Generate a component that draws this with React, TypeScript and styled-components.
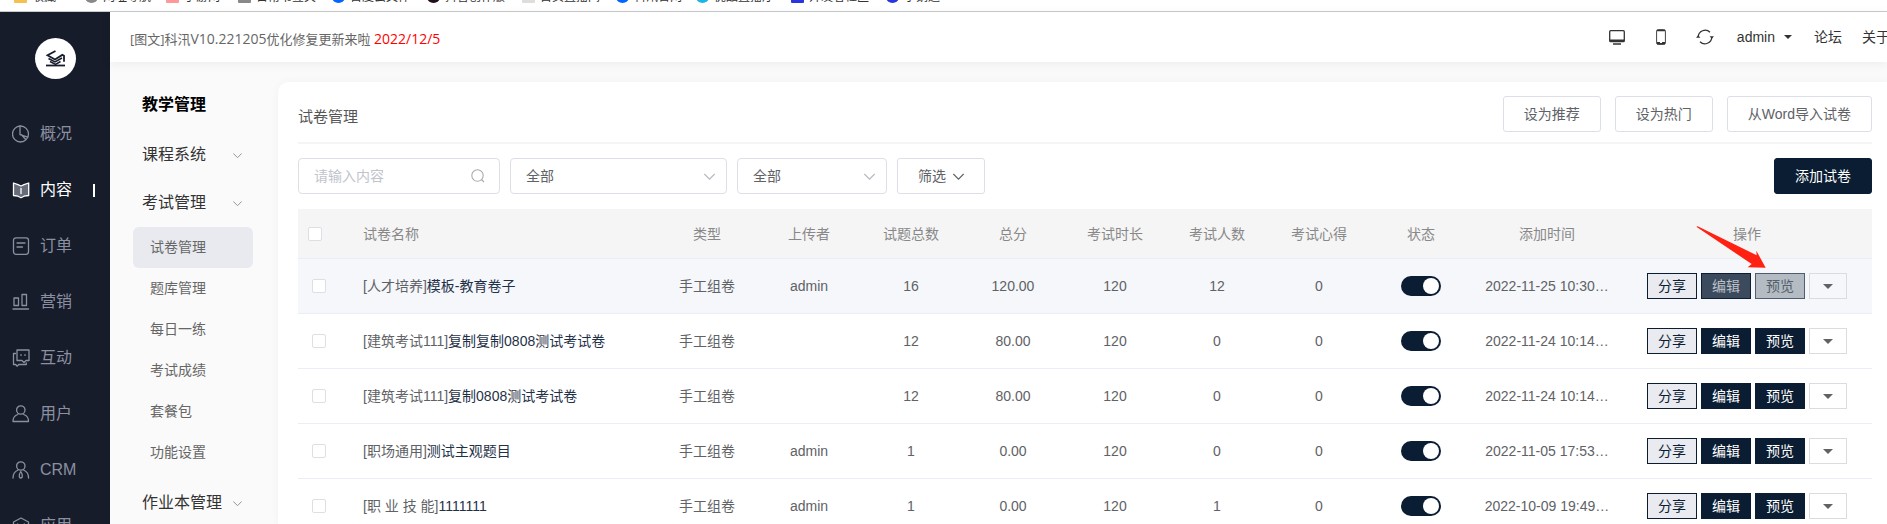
import React from "react";
import styled, { createGlobalStyle, css } from "styled-components";

const NAVY = "#0a1d33";
const LINE = "#ebeef5";

const GlobalStyle = createGlobalStyle`
  *, *::before, *::after { box-sizing: border-box; }
  body {
    margin: 0;
    background: #fafafa;
    font-family: "Liberation Sans", "Noto Sans CJK SC", sans-serif;
    font-size: 14px;
    line-height: 20px;
    color: #606266;
  }
  button, input, select { font: inherit; color: inherit; margin: 0; }
  a { color: inherit; text-decoration: none; }
  ul { list-style: none; margin: 0; padding: 0; }
`;

const Page = styled.div`
  display: flex;
  flex-direction: column;
  height: 100vh;
  overflow: hidden;
`;

/* ---------- bookmarks strip ---------- */
const Bookmarks = styled.nav`
  flex: none;
  display: flex;
  align-items: flex-end;
  height: 12px;
  padding: 0 14px 6px;
  overflow: hidden;
  background: #fff;
  border-bottom: 1px solid #c8cbcd;
  font-size: 12px;
  line-height: 16px;
  color: #333;
`;
const Bookmark = styled.a<{ $w: number }>`
  flex: none;
  display: flex;
  align-items: center;
  gap: 5px;
  width: ${(p) => p.$w}px;
  white-space: nowrap;
`;
const Favicon = styled.span<{ $c: string; $round?: boolean }>`
  width: 13px;
  height: 12px;
  background: ${(p) => p.$c};
  border-radius: ${(p) => (p.$round ? "50%" : "1px")};
`;

/* ---------- shell ---------- */
const Shell = styled.div`
  flex: 1;
  display: flex;
  min-height: 0;
`;
const Sidebar = styled.aside`
  flex: none;
  width: 110px;
  padding-top: 26px;
  overflow: hidden;
  background: #171c2b;
`;
const Logo = styled.a`
  display: flex;
  align-items: center;
  justify-content: center;
  width: 41px;
  height: 41px;
  margin: 0 auto 27px;
  border-radius: 50%;
  background: #fff;
`;
const SideLink = styled.a<{ $active?: boolean }>`
  display: flex;
  align-items: center;
  gap: 10px;
  height: 56px;
  padding: 0 15px 0 12px;
  font-size: 16px;
  color: ${(p) => (p.$active ? "#fff" : "#8b90a0")};
  ${(p) =>
    p.$active &&
    css`
      &::after {
        content: "";
        width: 2px;
        height: 13px;
        margin-left: auto;
        background: #fff;
      }
    `}
`;
const SideIcon = styled.svg`
  flex: none;
  width: 18px;
  height: 18px;
  fill: none;
  stroke: currentColor;
  stroke-width: 1.3;
  stroke-linejoin: round;
  stroke-linecap: round;
`;

const Body = styled.div`
  flex: 1;
  display: flex;
  flex-direction: column;
  min-width: 0;
`;
const TopBar = styled.header`
  position: relative;
  flex: none;
  display: flex;
  align-items: center;
  justify-content: space-between;
  height: 50px;
  padding-left: 20px;
  background: #fff;
  box-shadow: 0 2px 10px rgba(0, 0, 0, 0.06);
`;
const Notice = styled.a`
  padding-top: 4px;
  font-family: "Open Sans", "Noto Sans CJK SC", sans-serif;
  font-size: 13px;
  color: #666;
  white-space: nowrap;
`;
const Figures = styled.span<{ $red?: boolean }>`
  font-size: 14px;
  color: ${(p) => (p.$red ? "#f00" : "inherit")};
`;
const TopTools = styled.div`
  display: flex;
  align-items: center;
  color: #333;
  overflow: hidden;
`;
const ToolButton = styled.button`
  display: flex;
  align-items: center;
  justify-content: center;
  width: 44px;
  height: 24px;
  padding: 0;
  border: 0;
  background: none;
`;
const UserMenu = styled.button`
  display: flex;
  align-items: center;
  gap: 9px;
  margin: 0 2px 0 10px;
  padding: 0;
  border: 0;
  background: none;
`;
const TopLink = styled.a`
  margin-left: 20px;
  white-space: nowrap;
`;
const CutLink = styled(TopLink)`
  width: 25px;
`;
const Caret = styled.span<{ $s: number }>`
  border: ${(p) => p.$s}px solid transparent;
  border-top-color: currentColor;
  border-bottom-width: 0;
`;

const Columns = styled.div`
  flex: 1;
  display: flex;
  min-height: 0;
`;

/* ---------- second level menu ---------- */
const SubNav = styled.nav`
  flex: none;
  width: 168px;
  padding: 17px 25px 0 23px;
  overflow: hidden;
  background: #fafafa;
`;
const SubTitle = styled.h2`
  margin: 0;
  padding-left: 9px;
  font-size: 16px;
  line-height: 52px;
  font-weight: 700;
  color: #000;
`;
const GroupButton = styled.button`
  display: flex;
  align-items: center;
  justify-content: space-between;
  width: 100%;
  height: 48px;
  padding: 0 11px 0 9px;
  border: 0;
  background: none;
  font-size: 16px;
  color: #333;
  white-space: nowrap;
`;
const SubList = styled.ul`
  padding-bottom: 6px;
`;
const SubLink = styled.a<{ $active?: boolean }>`
  display: block;
  padding-left: 17px;
  line-height: 41px;
  border-radius: 6px;
  color: #666;
  background: ${(p) => (p.$active ? "#e8eaef" : "transparent")};
`;

/* ---------- main card ---------- */
const Main = styled.main`
  flex: 1;
  min-width: 0;
  padding-top: 20px;
`;
const Card = styled.section`
  height: 100%;
  padding: 0 15px 0 20px;
  border-radius: 10px 0 0 0;
  background: #fff;
  box-shadow: 0 0 8px rgba(0, 0, 0, 0.04);
`;
const CardHead = styled.div`
  display: flex;
  align-items: center;
  padding: 14px 0 10px;
  border-bottom: 2px solid #f5f5f5;
`;
const CardTitle = styled.h1`
  margin: 0 auto 0 0;
  padding-top: 6px;
  font-size: 15px;
  font-weight: 400;
  color: #555;
`;
const Button = styled.button<{ $primary?: boolean }>`
  display: flex;
  align-items: center;
  gap: 7px;
  height: 36px;
  padding: 0 20px;
  border: 1px solid ${(p) => (p.$primary ? NAVY : "#dcdfe6")};
  border-radius: 3px;
  background: ${(p) => (p.$primary ? NAVY : "#fff")};
  color: ${(p) => (p.$primary ? "#fff" : "#606266")};
  white-space: nowrap;
  ${CardHead} & + & { margin-left: 14px; }
`;
const Filters = styled.div`
  display: flex;
  gap: 10px;
  padding: 14px 0 15px;
  ${Button}:last-child { margin-left: auto; }
`;
const Field = styled.label<{ $w: number }>`
  display: flex;
  align-items: center;
  width: ${(p) => p.$w}px;
  height: 36px;
  padding-right: 11px;
  border: 1px solid #dcdfe6;
  border-radius: 4px;
  background: #fff;
  color: #c0c4cc;
`;
const fieldControl = css`
  flex: 1;
  min-width: 0;
  height: 34px;
  padding: 0 0 0 15px;
  border: 0;
  outline: 0;
  background: none;
  color: #606266;
`;
const TextInput = styled.input`
  ${fieldControl}
  &::placeholder { color: #c0c4cc; opacity: 1; }
`;
const Select = styled.select`
  ${fieldControl}
  appearance: none;
`;

/* ---------- table ---------- */
const Table = styled.table`
  width: 100%;
  table-layout: fixed;
  border-collapse: separate;
  border-spacing: 0;
`;
const Th = styled.th<{ $w?: number; $left?: boolean }>`
  width: ${(p) => (p.$w ? `${p.$w}px` : "auto")};
  height: 50px;
  padding: 0 10px;
  border-bottom: 1px solid ${LINE};
  background: #f5f5f5;
  font-weight: 400;
  color: #888;
  text-align: ${(p) => (p.$left ? "left" : "center")};
`;
const Td = styled.td<{ $left?: boolean }>`
  height: 55px;
  padding: 0 10px;
  border-bottom: 1px solid ${LINE};
  text-align: ${(p) => (p.$left ? "left" : "center")};
  white-space: nowrap;
`;
const CheckTd = styled(Td)`
  padding-left: 14px;
`;
const Row = styled.tr<{ $hover?: boolean }>`
  background: ${(p) => (p.$hover ? "#f5f7fb" : "#fff")};
`;
const Check = styled.input`
  appearance: none;
  display: block;
  width: 14px;
  height: 14px;
  border: 1px solid #dcdfe6;
  border-radius: 2px;
  background: #fff;
`;
const PaperLink = styled.a`
  color: #1f3147;
`;
const Switch = styled.input`
  appearance: none;
  display: block;
  width: 40px;
  height: 20px;
  margin: 0 auto;
  padding: 2px;
  border-radius: 10px;
  background: ${NAVY};
  &::before {
    content: "";
    display: block;
    width: 16px;
    height: 16px;
    margin-left: 20px;
    border-radius: 50%;
    background: #fff;
  }
`;
const Actions = styled.div`
  position: relative;
  display: flex;
  justify-content: center;
  gap: 4px;
`;
const looks = {
  light: ["#e9ebf0", NAVY, NAVY],
  solid: [NAVY, NAVY, "#fff"],
  pressed: ["#3b4a5c", NAVY, "#bcc1c8"],
  faded: ["#b4bbc2", "#4e5e70", "#53606d"],
  plain: ["transparent", "#dcdcdc", "#606266"],
};
const ActionButton = styled.button<{ $look: keyof typeof looks }>`
  display: flex;
  align-items: center;
  justify-content: center;
  width: ${(p) => (p.$look === "plain" ? 38 : 50)}px;
  height: 26px;
  padding: 0;
  background: ${(p) => looks[p.$look][0]};
  border: 1px solid ${(p) => looks[p.$look][1]};
  color: ${(p) => looks[p.$look][2]};
`;
const Pointer = styled.svg`
  position: absolute;
  right: 96px;
  bottom: 31px;
  width: 70px;
  height: 42px;
  pointer-events: none;
`;

const Chevron = ({ size = 9, color = "#909399" }: { size?: number; color?: string }) => (
  <svg width={size} height={size} viewBox="0 0 10 10" fill="none" stroke={color} strokeWidth="1.1" aria-hidden="true">
    <path d="M0.3 2.7 5 7.4 9.7 2.7" />
  </svg>
);

const sideIcons: Record<string, React.ReactNode> = {
  概况: (
    <>
      <circle cx="8.5" cy="9" r="8" />
      <path d="M8 1v8.6l7.8 2.6M9.5 9.7l4 4.6" />
    </>
  ),
  内容: (
    <>
      <path d="M1.500 2 6 3.600 9 5l3-1.400L16.700 2v12.500L12 15.200 9 16.800 6 15.200 1.500 14.500z" fill="#686c78" />
      <path d="M9 7.500v5" />
    </>
  ),
  订单: (
    <>
      <rect x="1.500" y="0.800" width="15" height="16.500" rx="2.500" />
      <path d="M5 6h8M5 10h5.500" />
    </>
  ),
  营销: (
    <>
      <rect x="2" y="5" width="4.500" height="7.500" />
      <rect x="10" y="1.500" width="4.500" height="11" />
      <path d="M1 16h15.500" />
    </>
  ),
  互动: (
    <>
      <path d="M5 1h12v10.500h-3l-2 2-2-2H5zM3.500 4.500H1.500v11h2.200l1.300 1.700 1.800-1.700h7.500V14" />
      <path d="M9 5.600v.8M13 5.600v.8" />
    </>
  ),
  用户: (
    <>
      <circle cx="8.800" cy="5" r="4.200" />
      <path d="M5.800 9.500C2.500 10.500 1 12.500 1 16.500h15.500c0-4-1.500-6-4.800-7" />
    </>
  ),
  CRM: (
    <>
      <circle cx="8.800" cy="5" r="4.200" />
      <path d="M6 9C2.500 10.500 1 13 1 17M11.600 9c3.500 1.500 5 4 5 8M8.800 10.500c-2 3-2 6.500 0 6.500s2-3.500 0-6.500z" />
    </>
  ),
  应用: (
    <>
      <path d="M9 1l7.500 4v8.500L9 17.500l-7.500-4V5z" />
      <path d="M5.500 7 9 9l3.500-2M9 9v4" />
    </>
  ),
};

const bookmarks: [string, string, boolean, number][] = [
  ["收藏", "#f5c04f", false, 71],
  ["网址导航", "#888", true, 81],
  ["手游网", "#f99", false, 72],
  ["日常书签夹", "#888", false, 94],
  ["百度云文件", "#06f", true, 95],
  ["抖音创作版", "#201018", true, 95],
  ["首页直播间", "#ddd", false, 94],
  ["科汛官网", "#06f", true, 80],
  ["优酷直播厅", "#19b6e8", true, 95],
  ["开发者社区", "#2a35e0", false, 95],
  ["小鹅通", "#2a35e0", true, 70],
];

const columns: [string, number][] = [
  ["类型", 102], ["上传者", 102], ["试题总数", 102], ["总分", 102], ["考试时长", 102],
  ["考试人数", 102], ["考试心得", 102], ["状态", 102], ["添加时间", 150], ["操作", 250],
];

const papers = [
  { tag: "人才培养", name: "模板-教育卷子", by: "admin", n: "16", score: "120.00", people: "12", at: "2022-11-25 10:30" },
  { tag: "建筑考试111", name: "复制复制0808测试考试卷", by: "", n: "12", score: "80.00", people: "0", at: "2022-11-24 10:14" },
  { tag: "建筑考试111", name: "复制0808测试考试卷", by: "", n: "12", score: "80.00", people: "0", at: "2022-11-24 10:14" },
  { tag: "职场通用", name: "测试主观题目", by: "admin", n: "1", score: "0.00", people: "0", at: "2022-11-05 17:53" },
  { tag: "职 业 技 能", name: "1111111", by: "admin", n: "1", score: "0.00", people: "1", at: "2022-10-09 19:49" },
];

export default function App() {
  return (
    <Page>
      <GlobalStyle />
      <Bookmarks aria-label="书签">
        {bookmarks.map(([name, color, round, w]) => (
          <Bookmark key={name} href="#" $w={w}>
            <Favicon $c={color} $round={round} />
            {name}
          </Bookmark>
        ))}
      </Bookmarks>
      <Shell>
        <Sidebar>
          <Logo href="#" aria-label="首页">
            <svg width="21" height="17" viewBox="0 0 21 17" fill="none" stroke="#171c2b" strokeWidth="1.800" aria-hidden="true">
              <path d="M10.500 1 2.500 5.300l7.500 4.200 7.300-4.600 1.700.9v6" />
              <path d="M3.500 8.500 10 12l7-4M5 11.500l5.500 3 5-3" strokeWidth="1.500" />
              <path d="M1 15.500h19" />
            </svg>
          </Logo>
          <nav>
            {Object.keys(sideIcons).map((name) => (
              <SideLink key={name} href="#" $active={name === "内容"}>
                <SideIcon viewBox="0 0 18 18" aria-hidden="true">{sideIcons[name]}</SideIcon>
                {name}
              </SideLink>
            ))}
          </nav>
        </Sidebar>
        <Body>
          <TopBar>
            <Notice href="#">
              [图文]科汛<Figures>V10.221205</Figures>优化修复更新来啦 <Figures $red>2022/12/5</Figures>
            </Notice>
            <TopTools>
              <ToolButton aria-label="电脑端">
                <svg width="16" height="15" viewBox="0 0 16 15" aria-hidden="true">
                  <rect x="0.700" y="0.700" width="14.600" height="11" rx="1" fill="none" stroke="#333" strokeWidth="1.300" />
                  <path d="M1 9.500h14v2.200H1zM4 13.300h8v1.400H4z" fill="#333" />
                </svg>
              </ToolButton>
              <ToolButton aria-label="手机端">
                <svg width="10" height="16" viewBox="0 0 10 16" aria-hidden="true">
                  <rect x="0.600" y="0.600" width="8.800" height="14.800" rx="1.500" fill="none" stroke="#444" strokeWidth="1" />
                  <path d="M1 1h8v1.300H1zM1 13h3v1h2v-1h3v2.200H1z" fill="#333" />
                </svg>
              </ToolButton>
              <ToolButton aria-label="刷新">
                <svg width="18" height="16" viewBox="0 0 18 16" fill="none" stroke="#333" strokeWidth="1.300" aria-hidden="true">
                  <path d="M2.200 8A6.900 6.900 0 0 1 14 3.300M15.800 8A6.900 6.900 0 0 1 4 12.700" />
                  <path d="M0 8.800h4.400L2.200 6.300zM18 7.200h-4.400l2.200 2.500z" fill="#333" stroke="none" />
                </svg>
              </ToolButton>
              <UserMenu>
                admin
                <Caret $s={4} />
              </UserMenu>
              <TopLink href="#">论坛</TopLink>
              <CutLink href="#">关于我们</CutLink>
            </TopTools>
          </TopBar>
          <Columns>
            <SubNav>
              <SubTitle>教学管理</SubTitle>
              <GroupButton>课程系统<Chevron /></GroupButton>
              <GroupButton>考试管理<Chevron /></GroupButton>
              <SubList>
                {["试卷管理", "题库管理", "每日一练", "考试成绩", "套餐包", "功能设置"].map((name, i) => (
                  <li key={name}>
                    <SubLink href="#" $active={i === 0}>{name}</SubLink>
                  </li>
                ))}
              </SubList>
              <GroupButton>作业本管理<Chevron /></GroupButton>
            </SubNav>
            <Main>
              <Card>
                <CardHead>
                  <CardTitle>试卷管理</CardTitle>
                  <Button>设为推荐</Button>
                  <Button>设为热门</Button>
                  <Button>从Word导入试卷</Button>
                </CardHead>
                <Filters>
                  <Field $w={202}>
                    <TextInput placeholder="请输入内容" aria-label="搜索试卷" />
                    <svg width="18" height="14" viewBox="0 0 18 14" fill="none" stroke="#a8abb2" strokeWidth="1.100" aria-hidden="true">
                      <circle cx="7.500" cy="6.500" r="5.700" />
                      <path d="m11.500 10.500 2.500 2.500" />
                    </svg>
                  </Field>
                  <Field $w={217}>
                    <Select aria-label="分类"><option>全部</option></Select>
                    <Chevron color="#b4b8c0" size={11} />
                  </Field>
                  <Field $w={150}>
                    <Select aria-label="类型"><option>全部</option></Select>
                    <Chevron color="#b4b8c0" size={11} />
                  </Field>
                  <Button>筛选<Chevron color="#606266" size={11} /></Button>
                  <Button $primary>添加试卷</Button>
                </Filters>
                <Table>
                  <thead>
                    <tr>
                      <Th $w={55} $left><Check type="checkbox" aria-label="全选" /></Th>
                      <Th $left>试卷名称</Th>
                      {columns.map(([name, w]) => (
                        <Th key={name} $w={w}>{name}</Th>
                      ))}
                    </tr>
                  </thead>
                  <tbody>
                    {papers.map((p, i) => (
                      <Row key={i} $hover={i === 0}>
                        <CheckTd $left><Check type="checkbox" aria-label={p.name} /></CheckTd>
                        <Td $left>[{p.tag}]<PaperLink href="#">{p.name}</PaperLink></Td>
                        <Td>手工组卷</Td>
                        <Td>{p.by}</Td>
                        <Td>{p.n}</Td>
                        <Td>{p.score}</Td>
                        <Td>120</Td>
                        <Td>{p.people}</Td>
                        <Td>0</Td>
                        <Td><Switch type="checkbox" role="switch" defaultChecked aria-label="状态" /></Td>
                        <Td>{p.at}…</Td>
                        <Td>
                          <Actions>
                            <ActionButton $look="light">分享</ActionButton>
                            <ActionButton $look={i === 0 ? "pressed" : "solid"}>编辑</ActionButton>
                            <ActionButton $look={i === 0 ? "faded" : "solid"}>预览</ActionButton>
                            <ActionButton $look="plain" aria-label="更多"><Caret $s={5} /></ActionButton>
                            {i === 0 && (
                              <Pointer viewBox="0 0 210 126" aria-hidden="true">
                                <path d="M1 2 5 1 182 88 181 74 209 125 155 124 167 114z" fill="#ff2112" />
                              </Pointer>
                            )}
                          </Actions>
                        </Td>
                      </Row>
                    ))}
                  </tbody>
                </Table>
              </Card>
            </Main>
          </Columns>
        </Body>
      </Shell>
    </Page>
  );
}
